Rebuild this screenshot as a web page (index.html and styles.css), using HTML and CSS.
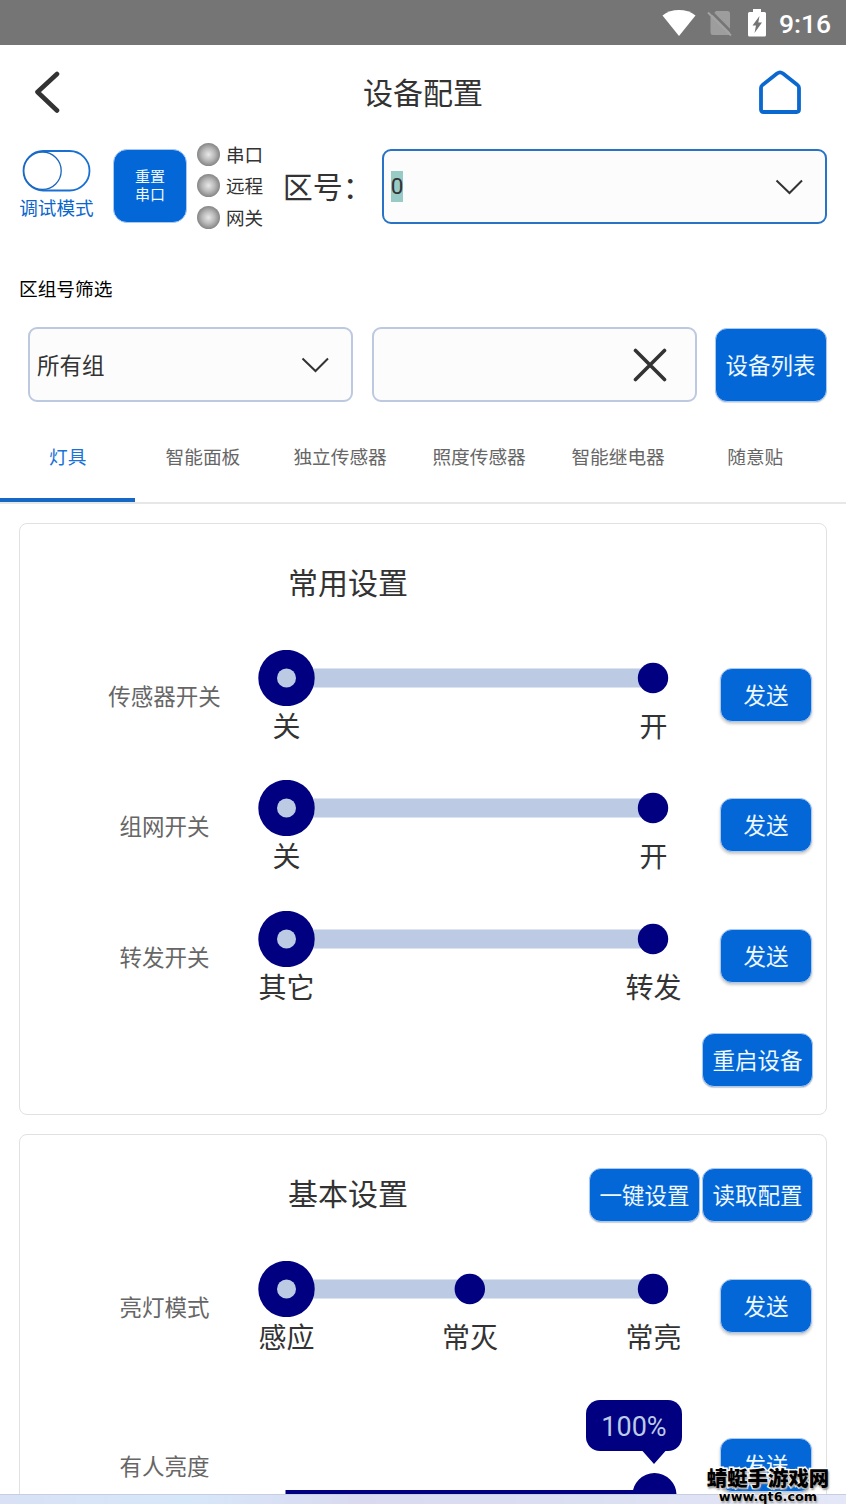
FILE: index.html
```html
<!DOCTYPE html>
<html lang="zh-CN">
<head>
<meta charset="utf-8">
<title>设备配置</title>
<link rel="stylesheet" href="styles.css">
</head>
<body>
<svg class="defs" width="0" height="0">
  <defs>
    <symbol id="two" viewBox="0 0 424 56">
      <path d="M28 18.500H395V37.500H28Z" fill="#bccae4"/>
      <circle cx="28.500" cy="28" r="28.200" fill="#000080"/>
      <circle cx="28.500" cy="28" r="9.500" fill="#bccae4"/>
      <circle cx="395" cy="28" r="15.200" fill="#000080"/>
    </symbol>
    <symbol id="down" viewBox="0 0 28 16">
      <path d="M1.500 1.500 14.500 14 27 1.500" fill="none" stroke="#333" stroke-width="2"/>
    </symbol>
  </defs>
</svg>
<div class="screen">
  <div class="status">
    <svg class="wifi" width="34" height="28" viewBox="0 0 34 28"><path d="M0.500 6.500C9.500-.8 24.500-.8 33.500 6.500L17 27Z" fill="#fff"/></svg>
    <svg class="sim" width="26" height="28" viewBox="0 0 26 28"><path d="M9 2H20.500Q23 2 23 4.500V26H6Q3.500 26 3.500 23V8Z" fill="#9d9d9d"/><path d="M3 1.500 26 24.500" stroke="#757575" stroke-width="2.500"/><path d="M1 3.500 24 26.500" stroke="#a3a3a3" stroke-width="2"/></svg>
    <svg class="battery" width="18" height="28" viewBox="0 0 18 28"><path d="M5 0H13V3H16.500Q18 3 18 4.500V26Q18 27.500 16.500 27.500H1.500Q0 27.500 0 26V4.500Q0 3 1.500 3H5Z" fill="#fff"/><path d="M11.500 7 4.500 16.500H8L6.500 24 14 13.500H10.300Z" fill="#757575"/></svg>
    <span class="clock">9:16</span>
  </div>
  <header class="header">
    <svg class="back" width="28" height="44" viewBox="0 0 28 44"><path d="M24 3 4.500 21 24 39.500" fill="none" stroke="#333" stroke-width="4.600" stroke-linecap="round" stroke-linejoin="round"/></svg>
    <h1 class="heading">设备配置</h1>
    <svg class="home" width="44" height="46" viewBox="0 0 44 46"><path d="M3 18Q3 16 4.500 15L19 3.500Q22 1.300 25 3.500L39.500 15Q41 16 41 18V39.500Q41 42 38.500 42H5.500Q3 42 3 39.500Z" fill="none" stroke="#0a68cf" stroke-width="3.800"/></svg>
  </header>
  <section class="controls">
    <div class="debug">
      <svg width="70" height="43" viewBox="0 0 70 43"><rect x="2.500" y="2" width="66" height="39.500" rx="19.700" fill="#fff" stroke="#1a70d2" stroke-width="1.800"/><circle cx="21.500" cy="21.700" r="18.700" fill="#fff" stroke="#1a66bd" stroke-width="1.300"/></svg>
      <span>调试模式</span>
    </div>
    <button class="btn reset">重置<br>串口</button>
    <ul class="links">
      <li><i class="led"></i><span>串口</span></li>
      <li><i class="led"></i><span>远程</span></li>
      <li><i class="led"></i><span>网关</span></li>
    </ul>
    <label class="zone">区号：</label>
    <div class="field active"><span class="selected">0</span><svg width="28" height="16"><use href="#down"/></svg></div>
  </section>
  <p class="caption">区组号筛选</p>
  <section class="filters">
    <div class="field group"><span>所有组</span><svg width="28" height="16"><use href="#down"/></svg></div>
    <div class="field search"><svg width="34" height="34" viewBox="0 0 34 34"><path d="M2.500 2.500 31.500 31.500M31.500 2.500 2.500 31.500" stroke="#333" stroke-width="3.600" stroke-linecap="round"/></svg></div>
    <button class="btn list">设备列表</button>
  </section>
  <nav class="tabs">
    <span class="tab on">灯具</span><span class="tab">智能面板</span><span class="tab wide">独立传感器</span><span class="tab wide">照度传感器</span><span class="tab wide">智能继电器</span><span class="tab">随意贴</span>
  </nav>
  <main class="cards">
    <section class="card">
      <div class="top"><h2>常用设置</h2></div>
      <div class="row"><span class="name">传感器开关</span><div class="slider"><svg width="424" height="56"><use href="#two"/></svg><div class="ticks"><span>关</span><span>开</span></div></div><button class="btn">发送</button></div>
      <div class="row"><span class="name">组网开关</span><div class="slider"><svg width="424" height="56"><use href="#two"/></svg><div class="ticks"><span>关</span><span>开</span></div></div><button class="btn">发送</button></div>
      <div class="row"><span class="name">转发开关</span><div class="slider"><svg width="424" height="56"><use href="#two"/></svg><div class="ticks"><span>其它</span><span>转发</span></div></div><button class="btn">发送</button></div>
      <div class="foot"><button class="btn long">重启设备</button></div>
    </section>
    <section class="card">
      <div class="top"><h2>基本设置</h2><div class="actions"><button class="btn long">一键设置</button><button class="btn long">读取配置</button></div></div>
      <div class="row"><span class="name">亮灯模式</span><div class="slider"><svg width="424" height="56" viewBox="0 0 424 56"><use href="#two"/><circle cx="211.800" cy="28" r="15.200" fill="#000080"/></svg><div class="ticks"><span>感应</span><span>常灭</span><span>常亮</span></div></div><button class="btn">发送</button></div>
      <div class="row level"><span class="name">有人亮度</span><div class="slider"><div class="bubble">100%</div><svg class="bar" width="424" height="60" viewBox="0 0 424 60"><path d="M27.500 39H396V58H27.500ZM384.500 0H407.500L396 13ZM418.500 44A22 22 0 0 1 374.500 44A22 22 0 0 1 418.500 44Z" fill="#000080"/></svg></div><button class="btn">发送</button></div>
    </section>
  </main>
  <div class="strip"></div>
  <div class="mark"><b>蜻蜓手游戏网</b><em>www.qt6.com</em></div>
</div>
</body>
</html>
```
FILE: styles.css
```css
* { box-sizing: border-box; }
body, h1, h2, p, ul { margin: 0; padding: 0; }
body { background: #fff; color: #333; font-family: Roboto, "Noto Sans CJK SC", sans-serif; overflow: hidden; }
svg { display: block; flex: none; }
.defs { position: absolute; }
.screen { position: relative; width: 846px; height: 1504px; display: flex; flex-direction: column; overflow: hidden; }
.screen > * { flex: none; }

.status { height: 45px; background: #757575; display: flex; align-items: flex-start; padding: 9px 15px 0 0; justify-content: flex-end; color: #fff; }
.sim { margin-left: 11px; }
.battery { margin-left: 15px; }
.clock { margin-left: 13px; width: 52px; font-size: 26.500px; font-weight: 500; line-height: 30px; white-space: nowrap; }

.header { height: 95px; display: flex; align-items: center; justify-content: space-between; padding: 0 44px 0 33px; }
.heading { font-size: 30px; font-weight: 400; line-height: 44px; margin-left: 27px; padding-top: 2px; }

.controls { height: 120px; display: flex; align-items: flex-start; padding: 9px 19px 0; }
.debug { width: 75px; display: flex; flex-direction: column; align-items: center; font-size: 18.600px; line-height: 34px; color: #0a66cc; }
.debug span { white-space: nowrap; }
.btn { flex: none; display: flex; align-items: center; justify-content: center; width: 92px; height: 54px; padding: 2px 0 0; border: 1.500px solid #a9c9f2; border-radius: 12px; background: #0367d7; color: #f0f8ff; font: 22.500px/30px Roboto, "Noto Sans CJK SC", sans-serif; box-shadow: 0 2px 3px rgba(0, 0, 0, .22); white-space: nowrap; }
.long { width: 111px; }
.reset { width: 74px; height: 74px; margin-left: 19px; padding: 0; border-radius: 14px; font-size: 15px; line-height: 18px; box-shadow: none; }
.links { list-style: none; margin: -10px 0 0 10px; width: 86px; font-size: 18.600px; }
.links li { display: flex; align-items: center; gap: 6px; height: 31.300px; white-space: nowrap; }
.links span { padding-bottom: 2px; }
.led { width: 23px; height: 23px; border-radius: 50%; background: radial-gradient(circle closest-side, #e8e8e8 0, #b8b8b8 55%, #858585 100%); }
.zone { width: 99px; font-size: 30px; line-height: 77px; height: 75px; white-space: nowrap; }
.field { display: flex; align-items: center; justify-content: space-between; height: 75px; border: 2px solid #bdc9e0; border-radius: 9px; background: #fcfcfc; font-size: 22.500px; padding: 0 22px 0 7px; }
.active { width: 446px; border-color: #2873c5; }
.selected { background: #98cbc5; line-height: 31px; font-size: 22.500px; }
.group span { padding-bottom: 2px; }

.caption { height: 67px; padding-left: 19px; font-size: 18.700px; line-height: 61px; color: #000; }
.filters { display: flex; align-items: center; height: 75px; padding-left: 28px; }
.group { width: 324.500px; }
.search { width: 325px; margin-left: 19px; justify-content: flex-end; padding-right: 28px; }
.list { width: 112px; height: 74px; margin-left: 18px; box-shadow: 0 1px 1px rgba(0, 0, 0, .15); }

.tabs { display: flex; height: 102px; border-bottom: 2px solid #e7e7e7; font-size: 18.700px; line-height: 113px; color: #666; text-align: center; }
.tab { width: 135.300px; height: 100px; flex: none; }
.wide { width: 139px; }
.on { color: #1872d8; border-bottom: 4px solid #1768c4; }

.cards { height: 990px; padding: 18.500px 19px 0; overflow: hidden; display: flex; flex-direction: column; gap: 19px; }
.card { flex: none; height: 592px; border: 1.500px solid #e1e1e1; border-radius: 8px; padding-right: 13px; }
.top { height: 107px; padding: 27px 0 0 248px; display: flex; align-items: flex-start; justify-content: space-between; }
.top h2 { width: 160px; padding-top: 11px; text-align: center; font-size: 30px; font-weight: 400; line-height: 44px; }
.actions { display: flex; gap: 2px; padding-top: 6px; }
.actions .btn, .foot .btn { box-shadow: 0 1px 1px rgba(0, 0, 0, .2); }
.row { height: 130.700px; display: flex; align-items: flex-start; padding: 19px 0 0 70px; }
.name { width: 149px; margin-right: 19px; text-align: center; font-size: 22.500px; line-height: 95px; color: #666; }
.slider { width: 424px; margin-right: 38px; }
.ticks { display: flex; justify-content: space-between; font-size: 28px; line-height: 44px; }
.ticks span { width: 57px; text-align: center; white-space: nowrap; }
.row .btn { margin-top: 18px; }
.foot { display: flex; justify-content: flex-end; padding-top: 10px; }
.level .name { line-height: 153px; }
.level .slider { margin-top: 9px; }
.level .btn { margin-top: 47px; }
.bubble { width: 96px; height: 51px; margin-left: 328px; border-radius: 14px; background: #000080; color: #bccae4; font-size: 27px; line-height: 55px; text-align: center; }

.strip { height: 10px; background: linear-gradient(90deg, #d8e1f6, #d7e7fa 22%, #d9daf0 42%, #dbdff2 70%, #e3e7f7); border-top: 1px solid #c6cee2; }
.mark { position: absolute; left: 706px; top: 1469px; width: 124px; color: #000; text-align: center; -webkit-text-stroke: 3px #fff; paint-order: stroke fill; text-shadow: 1px 2px 2px #999; }
.mark b { display: block; font-size: 20.400px; font-weight: 900; line-height: 21px; white-space: nowrap; }
.mark em { display: block; font: bold 12.800px/14px "DejaVu Sans", sans-serif; -webkit-text-stroke: 1.500px #fff; }
```
